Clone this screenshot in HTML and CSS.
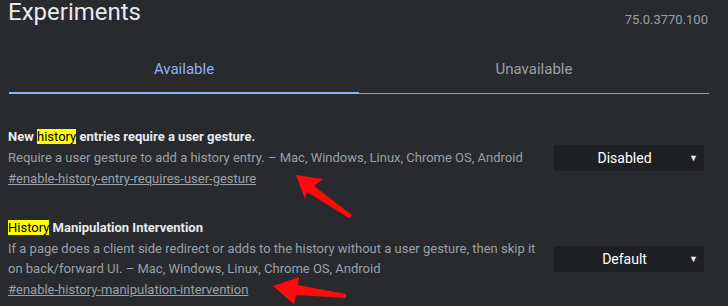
FILE: index.html
```html
<!DOCTYPE html>
<html>
<head>
<meta charset="utf-8">
<link rel="stylesheet" href="styles.css">
</head>
<body>
<div class="page">
  <header class="header">
    <h1 class="title">Experiments</h1>
    <div class="version">75.0.3770.100</div>
  </header>
  <nav class="tabs">
    <div class="tab tab-active">Available</div>
    <div class="tab">Unavailable</div>
  </nav>
  <div class="list">
    <div class="experiment">
      <div class="info">
        <div class="exp-name">New <mark class="hl">history</mark> entries require a user gesture.</div>
        <div class="exp-desc">Require a user gesture to add a history entry. – Mac, Windows, Linux, Chrome OS, Android</div>
        <a class="exp-link">#enable-history-entry-requires-user-gesture</a>
      </div>
      <div class="select"><span class="select-text">Disabled</span><span class="caret">▼</span></div>
    </div>
    <div class="experiment">
      <div class="info">
        <div class="exp-name"><mark class="hl">History</mark> Manipulation Intervention</div>
        <div class="exp-desc">If a page does a client side redirect or adds to the history without a user gesture, then skip it on back/forward UI. – Mac, Windows, Linux, Chrome OS, Android</div>
        <a class="exp-link">#enable-history-manipulation-intervention</a>
      </div>
      <div class="select"><span class="select-text">Default</span><span class="caret">▼</span></div>
    </div>
  </div>
  <svg class="arrow arrow-one" width="66" height="52" viewBox="0 0 66 52">
    <polygon points="6,5 33,9 24,16 62,45 59,48 17,22 15,29" fill="#ff0a0a"/>
  </svg>
  <svg class="arrow arrow-two" width="82" height="34" viewBox="0 0 82 34">
    <polygon points="5,14 31,5 30,13 78,22 78,26 28,23 26,32" fill="#ff0a0a"/>
  </svg>
</div>
</body>
</html>
```
FILE: styles.css
```css
html, body {
  margin: 0;
  padding: 0;
  background: #292a2d;
}
body {
  font-family: Roboto, "Liberation Sans", sans-serif;
  color: #e8eaed;
  width: 728px;
  height: 306px;
  overflow: hidden;
}
.page {
  position: relative;
  padding: 0 8px;
  height: 306px;
}
.header {
  display: flex;
  justify-content: space-between;
  align-items: flex-start;
  height: 40px;
  padding-right: 12px;
}
.title {
  margin: 0;
  font-size: 24px;
  font-weight: 400;
  line-height: 24px;
  color: #e8eaed;
}
.version {
  margin-top: 10px;
  font-size: 13px;
  line-height: 20px;
  color: #9aa0a6;
}
.tabs {
  display: flex;
  margin-left: 1px;
  width: 700px;
}
.tab {
  flex: 1;
  text-align: center;
  font-size: 15px;
  line-height: 20px;
  padding: 19px 0 14px;
  color: #9aa0a6;
  border-bottom: 1px solid #9aa0a6;
}
.tab-active {
  color: #8ab4f8;
  padding-bottom: 13px;
  border-bottom: 2px solid #8ab4f8;
}
.list {
  padding-top: 33px;
  display: flex;
  flex-direction: column;
  gap: 29px;
}
.experiment {
  display: flex;
  align-items: center;
  justify-content: space-between;
  padding-right: 16px;
}
.info {
  width: 540px;
  font-size: 13px;
  line-height: 20px;
}
.exp-name {
  font-weight: 700;
  color: #e8eaed;
  margin-bottom: 1px;
}
.hl {
  background: #ffff00;
  color: #000;
  font-weight: 400;
}
.exp-desc {
  color: #9aa0a6;
  margin-bottom: 1px;
}
.exp-link {
  display: inline-block;
  color: #9aa0a6;
  text-decoration: underline;
}
.select {
  width: 150px;
  height: 26px;
  background: #1f2023;
  display: flex;
  align-items: center;
  box-sizing: border-box;
  padding: 0 6px 0 0;
}
.select-text {
  flex: 1;
  text-align: center;
  font-size: 14px;
  color: #ffffff;
  padding-left: 6px;
}
.caret {
  font-size: 9px;
  color: #e8eaed;
}
.arrow {
  position: absolute;
}
.arrow-one {
  left: 290px;
  top: 170px;
}
.arrow-two {
  left: 268px;
  top: 272px;
}
```
